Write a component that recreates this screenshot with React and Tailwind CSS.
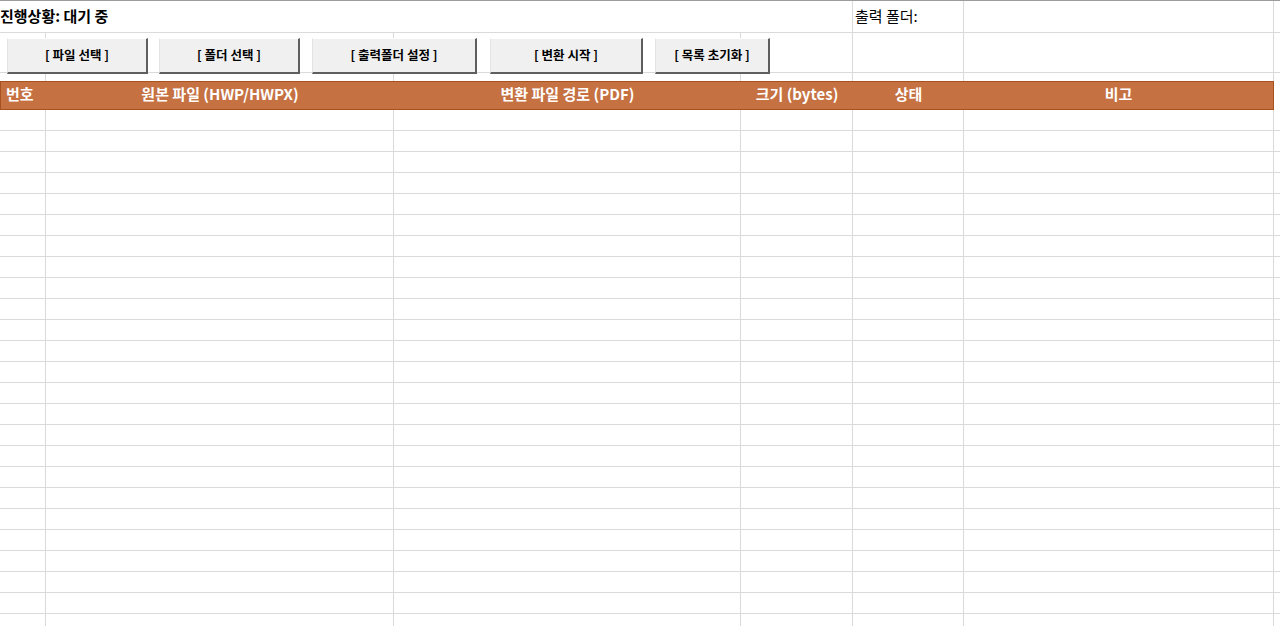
import React from 'react';

// column widths include the 1px right grid line
const cols = 'grid grid-cols-[46px_348px_347px_112px_111px_310px_1fr]';

const buttons = [
  { label: '[ 파일 선택 ]', className: 'ml-[7px] w-[141px]' },
  { label: '[ 폴더 선택 ]', className: 'ml-[11px] w-[141px]' },
  { label: '[ 출력폴더 설정 ]', className: 'ml-[12px] w-[165px]' },
  { label: '[ 변환 시작 ]', className: 'ml-[13px] w-[153px]' },
  { label: '[ 목록 초기화 ]', className: 'ml-[12px] w-[115px]' },
];

const headers = [
  { label: '번호', className: 'justify-start pl-[5px]' },
  { label: '원본 파일 (HWP/HWPX)', className: 'justify-center' },
  { label: '변환 파일 경로 (PDF)', className: 'justify-center' },
  { label: '크기 (bytes)', className: 'justify-center' },
  { label: '상태', className: 'justify-center' },
  { label: '비고', className: 'justify-center' },
];

const GridRow = ({ height }) => (
  <div className={`${cols} ${height} border-b border-[#dadada]`}>
    {[0, 1, 2, 3, 4, 5].map((i) => (
      <div key={i} className="border-r border-[#dadada]" />
    ))}
    <div />
  </div>
);

const App = () => {
  const rows = Array.from({ length: 25 });

  return (
    <div className="w-[1280px] h-[626px] overflow-hidden bg-white font-['Noto_Sans_CJK_KR','Malgun_Gothic',sans-serif] text-black">
      <div className="h-px bg-[#9c9c9c]" />

      {/* status row */}
      <div className={`${cols} h-[32px] border-b border-[#dadada]`}>
        <div className="col-span-4 flex items-center text-[15px] font-bold">
          진행상황: 대기 중
        </div>
        <div className="border-x border-[#dadada] flex items-center pl-[2px] text-[15px] -ml-px">
          출력 폴더:
        </div>
        <div className="border-r border-[#dadada]" />
        <div />
      </div>

      {/* button row */}
      <div className="relative">
        <GridRow height="h-[40px]" />
        <div className="absolute left-0 top-[5px] flex">
          {buttons.map((b) => (
            <button
              key={b.label}
              className={`${b.className} h-[36px] bg-[#f0f0f0] border-t border-l border-t-white border-l-[#e3e3e3] border-r-[2px] border-b-[2px] border-r-[#5f5f5f] border-b-[#5f5f5f] text-[12.5px] font-bold flex items-center justify-center whitespace-pre`}
            >
              {b.label}
            </button>
          ))}
        </div>
      </div>

      <div className={`${cols} h-[8px]`}>
        {[0, 1, 2, 3, 4, 5].map((i) => (
          <div key={i} className="border-r border-[#dadada]" />
        ))}
        <div />
      </div>

      {/* header bar */}
      <div className="grid grid-cols-[45px_348px_347px_112px_111px_309px] w-[1274px] h-[29px] bg-[#c57142] border border-[#a9501f] text-white text-[15px] font-bold">
        {headers.map((h) => (
          <div key={h.label} className={`flex items-center pb-[3px] ${h.className}`}>
            {h.label}
          </div>
        ))}
      </div>

      {rows.map((_, i) => (
        <GridRow key={i} height="h-[21px]" />
      ))}
    </div>
  );
};

export default App;
